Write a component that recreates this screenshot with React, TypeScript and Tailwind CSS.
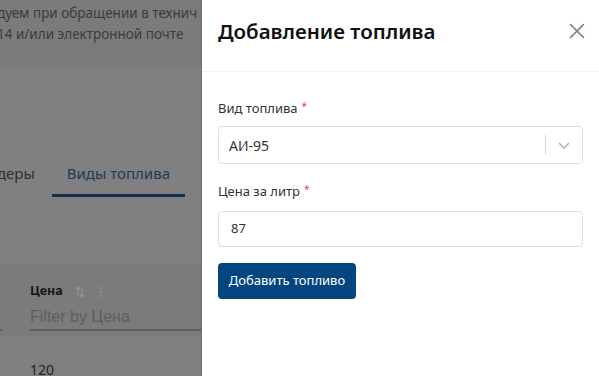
const Label = ({ text }: { text: string }) => (
  <div className="flex items-start text-[13px] leading-4 text-[#333]">
    <span>{text}</span>
    <span className="ml-1 text-[10px] leading-3 text-[#e5484d]">*</span>
  </div>
);

const App = () => {
  return (
    <div
      className="flex h-[376px] w-[599px] overflow-hidden bg-white"
      style={{ fontFamily: '"Noto Sans", "Open Sans", sans-serif' }}
    >
      {/* page behind the drawer, dimmed */}
      <div className="flex w-[202px] shrink-0 flex-col overflow-hidden border-r border-[#6e6e6e] bg-[#808080]">
        <div className="h-[68px] shrink-0 bg-[#7b7b7b] pt-[3px] text-[13.5px] leading-[21px] whitespace-nowrap text-[#3b3b3b]">
          <p className="-ml-[3px]">дуем при обращении в технич</p>
          <p className="-ml-[3px]">14 и/или электронной почте</p>
        </div>
        <div className="mt-[94px] flex h-[35px] shrink-0 items-start text-[15px] whitespace-nowrap">
          <span className="-ml-[3px] text-[#2f2f2f]">деры</span>
          <div className="ml-[17px] flex h-[35px] w-[133px] flex-col items-center border-b-[3px] border-[#11304f]">
            <span className="text-[#1d3a57]">Виды топлива</span>
          </div>
        </div>
        <div className="mt-[67px] flex h-[72px] shrink-0 items-end bg-[#7b7b7b]">
          <div className="mb-[5px] h-[2px] w-[2px] bg-[#5c5c5c]" />
          <div className="mb-[5px] ml-[28px] flex flex-1 flex-col border-b-2 border-[#5c5c5c] pb-[1px]">
            <div className="flex items-center gap-[6px] text-[12.5px] font-bold text-[#151515]">
              <span>Цена</span>
              <svg width="10" height="12" viewBox="0 0 10 12" className="ml-[6px]">
                <path d="M3 1v10M1 3l2-2 2 2M7 11V1M5 9l2 2 2-2" stroke="#9a9a9a" strokeWidth="1" fill="none" />
              </svg>
              <svg width="4" height="12" viewBox="0 0 4 12" className="ml-[8px]">
                <circle cx="2" cy="2" r="1" fill="#9a9a9a" />
                <circle cx="2" cy="6" r="1" fill="#9a9a9a" />
                <circle cx="2" cy="10" r="1" fill="#9a9a9a" />
              </svg>
            </div>
            <span
              className="mt-[5px] text-[16px] leading-[22px] text-[#5e5e5e]"
              style={{ fontFamily: '"Liberation Sans", Arial, sans-serif' }}
            >
              Filter by Цена
            </span>
          </div>
        </div>
        <div className="ml-[30px] mt-[23px] text-[14px] text-[#222]">120</div>
      </div>

      {/* drawer */}
      <div className="flex flex-1 flex-col bg-white">
        <div className="flex h-[72px] shrink-0 items-center justify-between border-b border-[#eef0f6] pl-4 pr-[14px] pb-[9px]">
          <h2 className="text-[20.5px] font-semibold text-[#111]">Добавление топлива</h2>
          <svg width="16" height="16" viewBox="0 0 16 16">
            <path d="M1.5 1.5l13 13M14.5 1.5l-13 13" stroke="#7a7a7a" strokeWidth="1.6" strokeLinecap="round" />
          </svg>
        </div>
        <div className="flex flex-col px-4 pt-[28px]">
          <Label text="Вид топлива" />
          <div className="mt-[10px] flex h-[38px] items-center rounded-[4px] border border-[#dcdfe4] pl-[10px] pr-[10px]">
            <span className="flex-1 text-[14px] text-[#333]">АИ-95</span>
            <div className="h-[20px] w-px bg-[#d6d6d6]" />
            <svg width="14" height="9" viewBox="0 0 14 9" className="ml-[11px] mr-[1px]">
              <path d="M2 2l5 5 5-5" stroke="#b5b5b5" strokeWidth="1.6" fill="none" />
            </svg>
          </div>
          <div className="mt-[19px]">
            <Label text="Цена за литр" />
          </div>
          <div className="mt-[12px] flex h-[36px] items-center rounded-[4px] border border-[#dcdfe4] pl-[12px] text-[13px] text-[#333]">
            87
          </div>
          <button className="mt-[16px] h-[36px] w-[138px] rounded-[4px] bg-[#03467f] text-[13px] text-white">
            Добавить топливо
          </button>
        </div>
      </div>
    </div>
  );
};

export default App;
